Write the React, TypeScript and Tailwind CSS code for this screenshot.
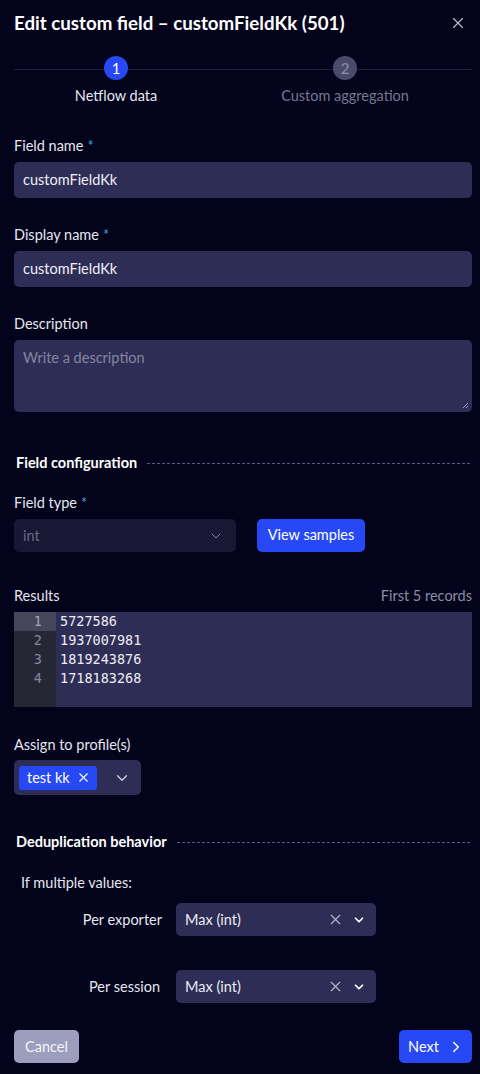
import { X, ChevronDown, ChevronRight } from "lucide-react";

function Label({ text, required }: { text: string; required?: boolean }) {
  return (
    <div className="text-[14.5px] leading-5 text-[#e6e6f0]">
      {text}
      {required && <span className="ml-1 text-[#3fa2d6]">*</span>}
    </div>
  );
}

function SectionTitle({ text }: { text: string }) {
  return (
    <div className="flex items-center pl-[2px]">
      <span className="text-[14.5px] leading-5 font-bold text-white">{text}</span>
      <div className="ml-[10px] mr-[2px] flex-1 border-t border-dashed border-[#5a5b7e]" />
    </div>
  );
}

function DedupSelect({ value }: { value: string }) {
  return (
    <div className="flex h-[33px] w-[200px] items-center rounded-[5px] bg-[#2e2d55] pl-[9px] pr-[10px] text-[14.5px] text-[#ececf4]">
      <span className="flex-1">{value}</span>
      <X size={17} strokeWidth={1.5} className="text-[#b9b9cc]" />
      <ChevronDown size={14} strokeWidth={3} className="ml-[8px] text-white" />
    </div>
  );
}

const rows = ["5727586", "1937007981", "1819243876", "1718183268", ""];

export default function App() {
  return (
    <main
      className="min-h-[1074px] w-[480px] bg-[#03031b] pl-[14px] pr-[8px] text-white"
      style={{ fontFamily: "Lato, 'Open Sans', sans-serif" }}
    >
      <header className="flex items-center justify-between pt-[11px]">
        <h1 className="text-[18.7px] leading-6 font-bold text-white">
          Edit custom field – customFieldKk (501)
        </h1>
        <X size={18} strokeWidth={1.5} className="mr-[5px] text-[#c4c4d6]" />
      </header>

      <div className="relative mt-[21px] grid grid-cols-[204px_1fr]">
        <div className="absolute left-0 right-0 top-[13px] border-t border-[#1f1f3c]" />
        <div className="relative flex flex-col items-center">
          <div className="flex h-6 w-6 items-center justify-center rounded-full bg-[#2649f5] text-[15px] text-white">
            1
          </div>
          <div className="mt-[6px] text-[14.5px] leading-5 text-[#e8e8f2]">Netflow data</div>
        </div>
        <div className="relative flex flex-col items-center">
          <div className="flex h-6 w-6 items-center justify-center rounded-full bg-[#4a4a6c] text-[15px] text-[#8e8ea8]">
            2
          </div>
          <div className="mt-[6px] text-[14.5px] leading-5 text-[#77778f]">Custom aggregation</div>
        </div>
      </div>

      <div className="mt-[30px]">
        <Label text="Field name" required />
        <div className="mt-[6px] flex h-9 items-center rounded-[5px] bg-[#2e2d55] px-[9px] text-[14.5px] text-[#f0f0f6]">
          customFieldKk
        </div>
      </div>

      <div className="mt-[27px]">
        <Label text="Display name" required />
        <div className="mt-[6px] flex h-9 items-center rounded-[5px] bg-[#2e2d55] px-[9px] text-[14.5px] text-[#f0f0f6]">
          customFieldKk
        </div>
      </div>

      <div className="mt-[27px]">
        <Label text="Description" />
        <div className="relative mt-[6px] h-[72px] rounded-[5px] bg-[#2e2d55] px-[9px] pt-[8px] text-[14.5px] leading-5 text-[#8585a0]">
          Write a description
          <svg className="absolute bottom-[3px] right-[3px]" width="7" height="7" viewBox="0 0 7 7">
            <path d="M1 6 L6 1 M4 6 L6 4" stroke="#a0a0b8" strokeWidth="1" />
          </svg>
        </div>
      </div>

      <div className="mt-[41px]">
        <SectionTitle text="Field configuration" />
      </div>

      <div className="mt-[20px]">
        <Label text="Field type" required />
        <div className="mt-[6px] flex items-center">
          <div className="flex h-[33px] w-[222px] items-center rounded-[5px] bg-[#181734] pl-[9px] pr-[12px] text-[14.5px] text-[#6a6a84]">
            <span className="flex-1">int</span>
            <ChevronDown size={16} strokeWidth={1.5} className="text-[#8a8aa0]" />
          </div>
          <button className="ml-[21px] -mt-[1px] h-[33px] w-[108px] rounded-[5px] bg-[#2649f5] text-[14.5px] text-white">
            View samples
          </button>
        </div>
      </div>

      <div className="mt-[34px]">
        <div className="flex items-center justify-between text-[14.5px] leading-5">
          <span className="text-[#e6e6f0]">Results</span>
          <span className="text-[#8d8da4]">First 5 records</span>
        </div>
        <div
          className="mt-[6px] flex h-[95px] bg-[#2e2d55] text-[13.5px] leading-[19px]"
          style={{ fontFamily: "'DejaVu Sans Mono', 'Liberation Mono', monospace" }}
        >
          <div className="w-[42px] bg-[#262734] text-[#86879a]">
            {rows.map((_, i) => (
              <div key={i} className={`h-[19px] pr-[14px] text-right ${i === 0 ? "bg-[#45465a] text-[#a4a5b6]" : ""}`}>
                {i < 4 ? i + 1 : ""}
              </div>
            ))}
          </div>
          <div className="flex-1 pl-[4px] text-[#eeeef6]">
            {rows.map((r, i) => (
              <div key={i} className="h-[19px]">
                {r}
              </div>
            ))}
          </div>
        </div>
      </div>

      <div className="mt-[28px]">
        <Label text="Assign to profile(s)" />
        <div className="mt-[5px] flex h-[35px] w-[127px] items-center rounded-[5px] bg-[#2e2d55] pl-[5px] pr-[10px]">
          <div className="flex h-6 items-center rounded-[3px] bg-[#2649f5] pl-[8px] pr-[6px] text-[14.5px] text-white">
            test kk
            <X size={15} strokeWidth={1.75} className="ml-[6px]" />
          </div>
          <div className="flex-1" />
          <ChevronDown size={18} strokeWidth={1.75} className="text-[#d0d0e0]" />
        </div>
      </div>

      <div className="mt-[37px]">
        <SectionTitle text="Deduplication behavior" />
      </div>

      <div className="mt-[21px] pl-[7px] text-[14.5px] leading-5 text-[#e6e6f0]">If multiple values:</div>

      <div className="mt-[10px] grid grid-cols-[148px_200px] items-center gap-x-[14px] gap-y-[34px] text-[14.5px]">
        <span className="text-right text-[#e6e6f0]">Per exporter</span>
        <DedupSelect value="Max (int)" />
        <span className="pr-[2px] text-right text-[#e6e6f0]">Per session</span>
        <DedupSelect value="Max (int)" />
      </div>

      <div className="mt-[27px] flex items-center justify-between">
        <button className="h-[33px] w-[65px] rounded-[5px] bg-[#9c9ebd] text-[14.5px] text-[#f4f4fa]">
          Cancel
        </button>
        <button className="flex h-[33px] w-[73px] items-center justify-center rounded-[5px] bg-[#2649f5] pl-[2px] text-[14.5px] text-white">
          Next
          <ChevronRight size={18} strokeWidth={2} className="ml-[8px]" />
        </button>
      </div>
    </main>
  );
}
